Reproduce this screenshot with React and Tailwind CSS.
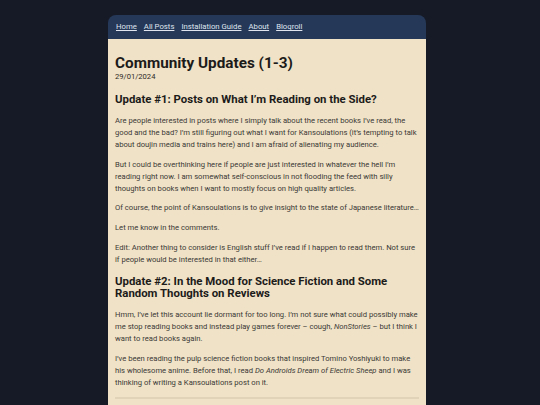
export default function App() {
  const p = "mb-[7.75px] text-[7.65px] leading-[12px] text-[#3b3937]";
  return (
    <div
      className="min-h-screen bg-[#161a26] pt-[15px]"
      style={{ fontFamily: "Roboto, 'Noto Sans', sans-serif" }}
    >
      <div className="ml-[108px] w-[318px] rounded-t-[8px] overflow-hidden">
        <nav className="bg-[#253858] h-[24px] flex items-center gap-[7px] px-[8px] text-[7.75px] text-[#dfe4ee]">
          <a className="underline">Home</a>
          <a className="underline">All Posts</a>
          <a className="underline">Installation Guide</a>
          <a className="underline">About</a>
          <a className="underline">Blogroll</a>
        </nav>
        <main className="bg-[#f0e2c6] pl-[7px] pr-[7px] pt-[17px] pb-[20px]">
          <h1 className="text-[15.3px] leading-[15px] font-bold text-[#1c1b1a]">
            Community Updates (1-3)
          </h1>
          <div className="text-[7.6px] leading-[12px] text-[#2e2b28]">29/01/2024</div>
          <h2 className="mt-[10px] mb-[9.5px] text-[11.4px] leading-[12.3px] font-bold text-[#1c1b1a]">
            Update #1: Posts on What I’m Reading on the Side?
          </h2>
          <p className={p}>
            Are people interested in posts where I simply talk about the recent books I’ve read, the good and the bad? I’m still figuring out what I want for Kansoulations (it’s tempting to talk about doujin media and trains here) and I am afraid of alienating my audience.
          </p>
          <p className={p}>
            But I could be overthinking here if people are just interested in whatever the hell I’m reading right now. I am somewhat self-conscious in not flooding the feed with silly thoughts on books when I want to mostly focus on high quality articles.
          </p>
          <p className={p}>
            Of course, the point of Kansoulations is to give insight to the state of Japanese literature…
          </p>
          <p className={p}>Let me know in the comments.</p>
          <p className={p}>
            Edit: Another thing to consider is English stuff I’ve read if I happen to read them. Not sure if people would be interested in that either…
          </p>
          <h2 className="mt-[9px] mb-[10px] text-[11.4px] leading-[12.3px] font-bold text-[#1c1b1a]">
            Update #2: In the Mood for Science Fiction and Some Random Thoughts on Reviews
          </h2>
          <p className={p}>
            Hmm, I’ve let this account lie dormant for too long. I’m not sure what could possibly make me stop reading books and instead play games forever – cough, <em>NonStories</em> – but I think I want to read books again.
          </p>
          <p className={p}>
            I’ve been reading the pulp science fiction books that inspired Tomino Yoshiyuki to make his wholesome anime. Before that, I read <em>Do Androids Dream of Electric Sheep</em> and I was thinking of writing a Kansoulations post on it.
          </p>
          <hr className="mt-[7px] border-0 border-t-2 border-[#e0d3b8]" />
        </main>
      </div>
    </div>
  );
}
